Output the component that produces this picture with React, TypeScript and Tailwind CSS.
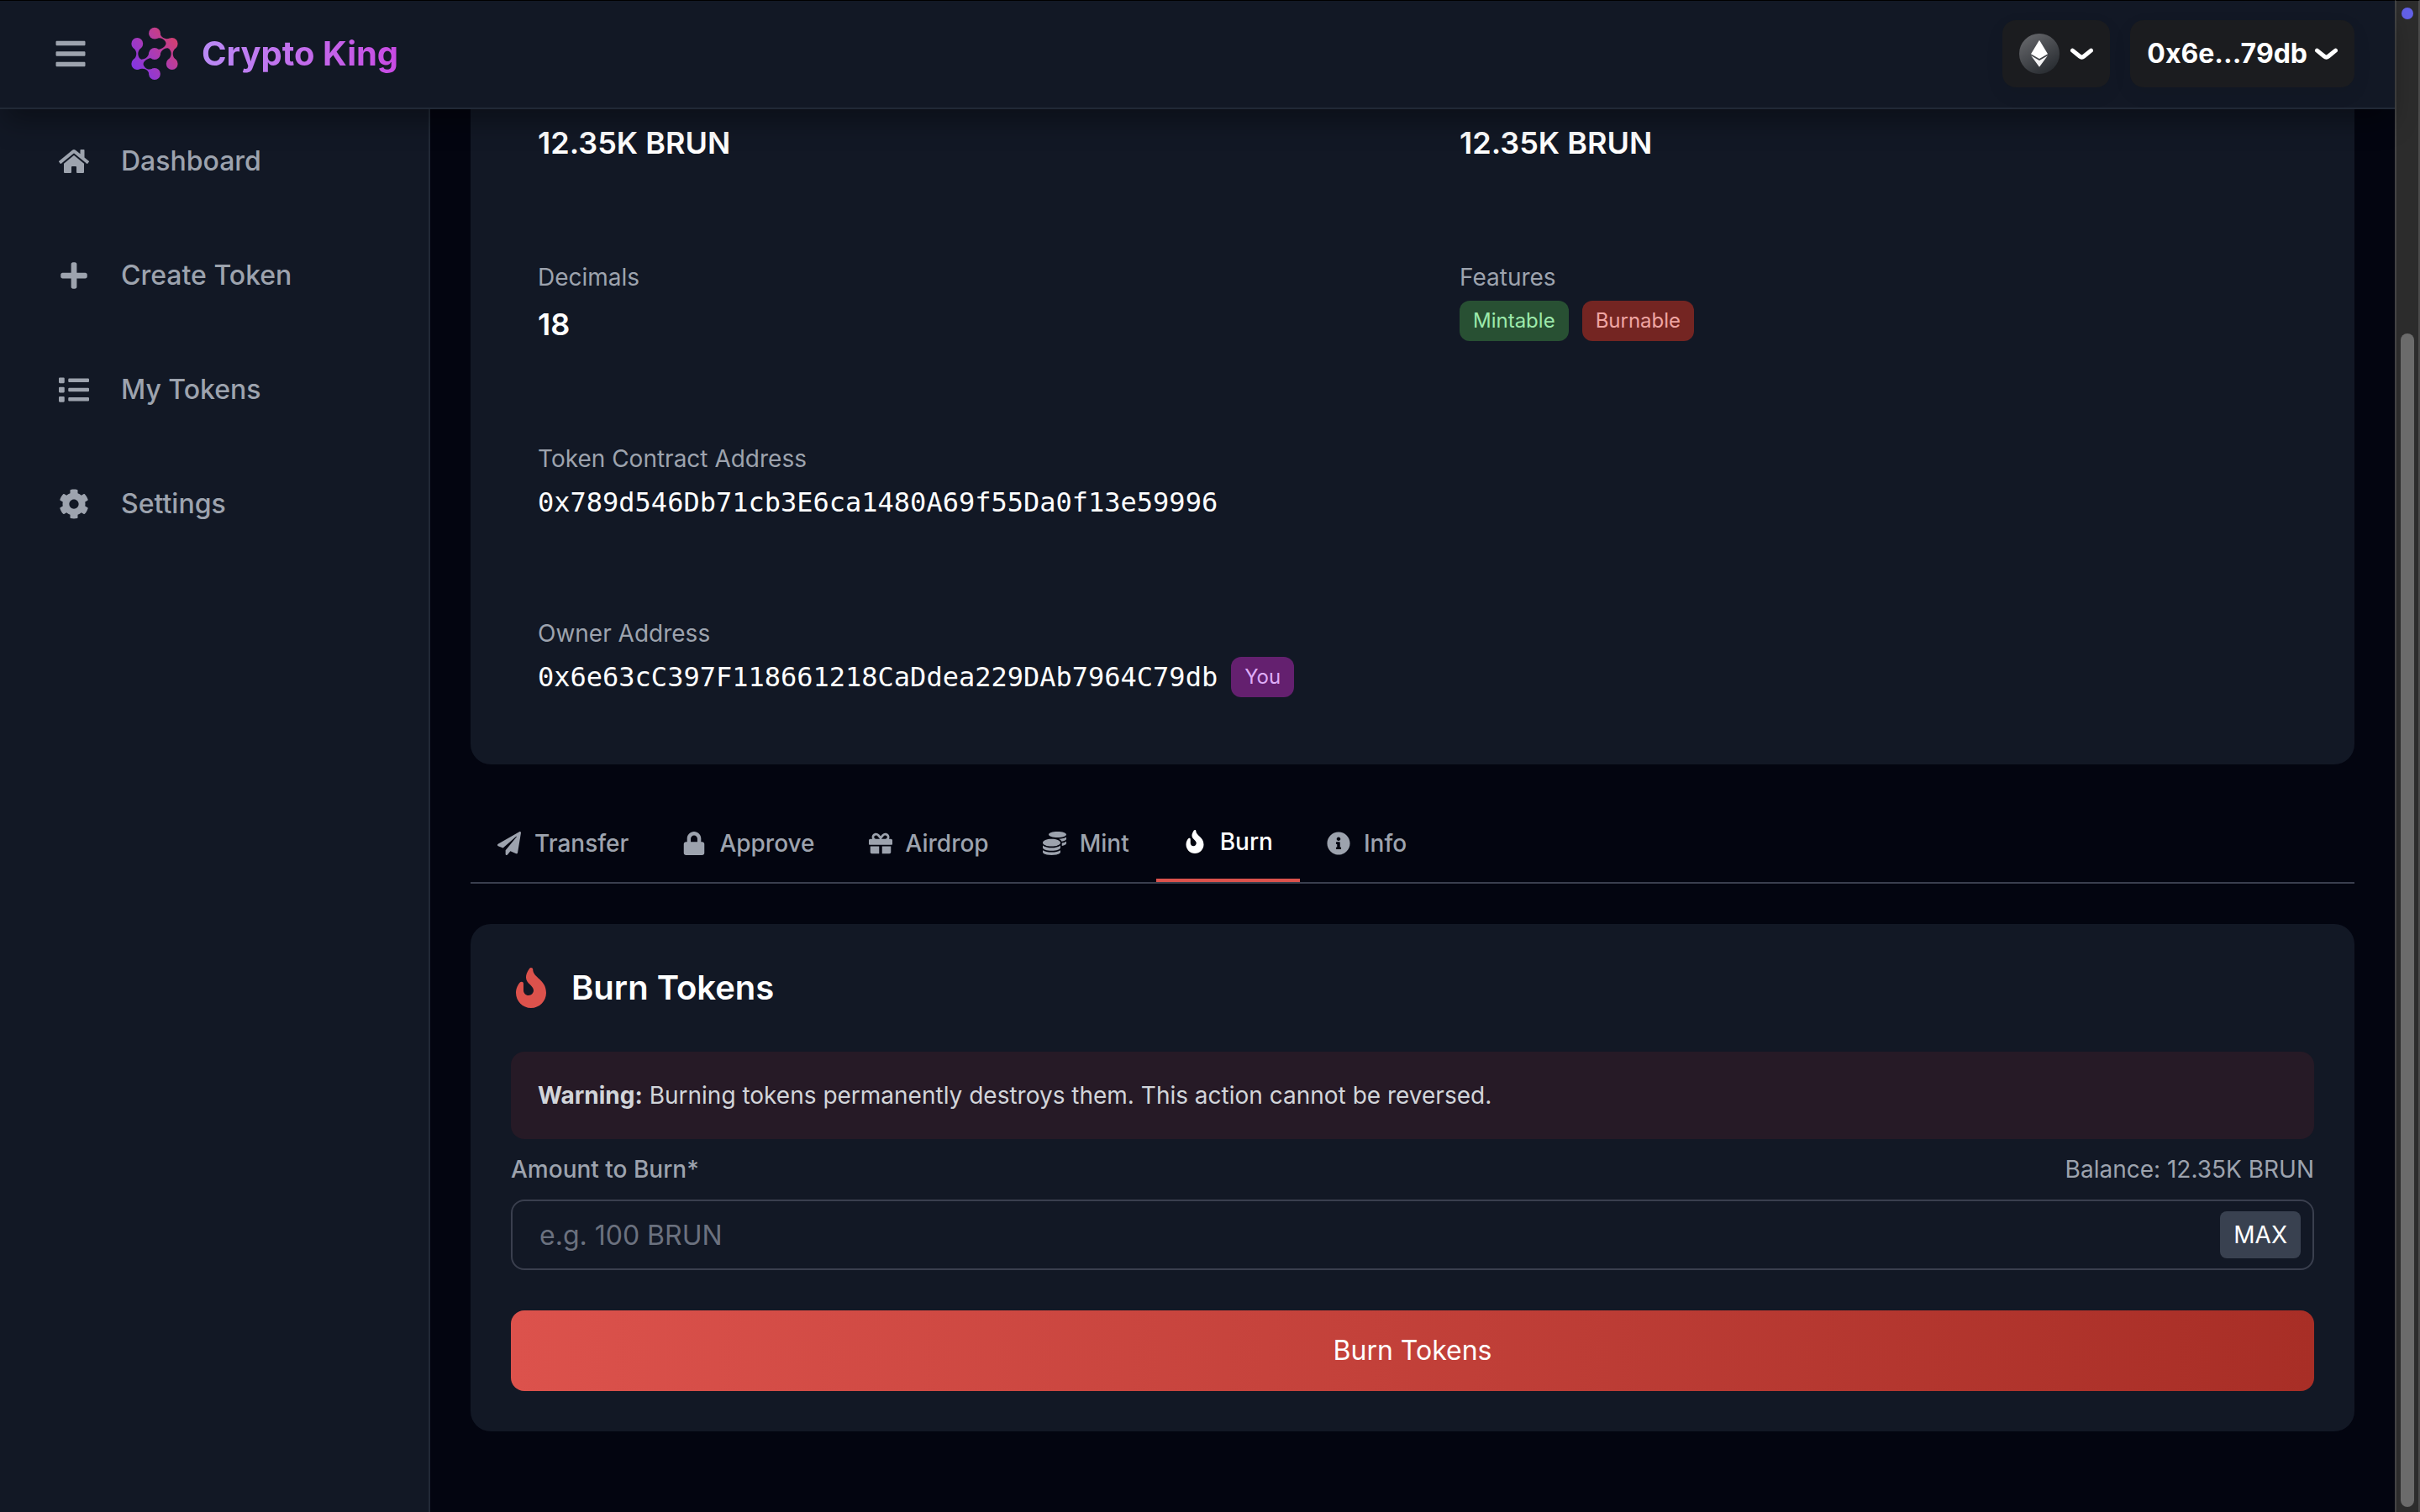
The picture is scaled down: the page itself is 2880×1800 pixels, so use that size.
import type { ReactNode } from "react";
import type { IconType } from "react-icons";
import {
  FaBars,
  FaCog,
  FaCoins,
  FaFire,
  FaGift,
  FaHome,
  FaInfoCircle,
  FaList,
  FaLock,
  FaPaperPlane,
  FaPlus,
} from "react-icons/fa";

const navItems: { label: string; icon: IconType }[] = [
  { label: "Dashboard", icon: FaHome },
  { label: "Create Token", icon: FaPlus },
  { label: "My Tokens", icon: FaList },
  { label: "Settings", icon: FaCog },
];

const tabs: { label: string; icon: IconType; active?: boolean }[] = [
  { label: "Transfer", icon: FaPaperPlane },
  { label: "Approve", icon: FaLock },
  { label: "Airdrop", icon: FaGift },
  { label: "Mint", icon: FaCoins },
  { label: "Burn", icon: FaFire, active: true },
  { label: "Info", icon: FaInfoCircle },
];

const logoNodes = [
  [38, 15.7],
  [58.7, 28],
  [17.3, 28],
  [38, 40],
  [58.7, 52],
  [17.3, 52],
  [38, 64],
];

function Logo() {
  return (
    <svg className="size-16" viewBox="6 8 64 64" aria-hidden="true">
      <defs>
        <linearGradient id="logo" gradientUnits="userSpaceOnUse" x1="14" y1="56" x2="60" y2="22">
          <stop offset="0" stopColor="#8536e0" />
          <stop offset="0.5" stopColor="#ac3bb4" />
          <stop offset="1" stopColor="#d03f74" />
        </linearGradient>
      </defs>
      <g fill="url(#logo)">
        {logoNodes.map(([cx, cy]) => (
          <circle key={`${cx}-${cy}`} cx={cx} cy={cy} r="6.9" />
        ))}
        {/* Tapered links: wide at each node, thin in the middle */}
        <path d="M12.5 32.5Q16.3 36 16.3 40Q16.3 44 12.5 47.5H22.1Q18.3 44 18.3 40Q18.3 36 22.1 32.5Z" />
        <path d="M53.9 32.5Q57.7 36 57.7 40Q57.7 44 53.9 47.5H63.5Q59.7 44 59.7 40Q59.7 36 63.5 32.5Z" />
        <path d="M44.5 14.5Q44.5 18.5 48.3 21Q51.5 23 56 21.5L52 30Q52 25 47.5 22.3Q44 20.5 39.5 22.2Z" />
        <path d="M36.7 33.5Q42 36.5 47.3 33.2Q52 30.5 52 25.5L60 34.5Q53 32.2 49 34.5Q44.6 37 44.8 42Z" />
        <path d="M39.3 46.5Q34 43.5 28.7 46.8Q24 49.5 24 54.5L16 45.5Q23 47.8 27 45.5Q31.4 43 31.2 38Z" />
        <path d="M31.5 65.2Q31.5 61.2 27.7 58.7Q24 56.5 16 58.9L24 49.5Q24 55 28.5 57.7Q32 59.5 36.5 57.5Z" />
      </g>
    </svg>
  );
}

function EthIcon() {
  return (
    <svg className="size-12" viewBox="0 0 48 48" aria-hidden="true">
      <defs>
        <linearGradient id="ethDisc" x1="0.2" y1="0" x2="0.8" y2="1">
          <stop offset="0" stopColor="#66676b" />
          <stop offset="1" stopColor="#25292e" />
        </linearGradient>
      </defs>
      <circle cx="24" cy="24" r="24" fill="url(#ethDisc)" />
      <path d="M24 7.7L34 24.2L24 29.9L14 24.2Z" fill="#fff" />
      <path d="M14.1 26.2L24 31.9L33.9 26.2L24 39.7Z" fill="#f2f2f3" />
    </svg>
  );
}

function ChevronIcon() {
  return (
    <svg className="h-3.5 w-7" viewBox="0 0 14 7" fill="none" aria-hidden="true">
      <path
        d="M12.75 1.54001L8.51647 5.0038C7.77974 5.60658 6.72026 5.60658 5.98352 5.0038L1.75 1.54001"
        stroke="currentColor"
        strokeWidth="2.5"
        strokeLinecap="round"
        strokeLinejoin="round"
      />
    </svg>
  );
}

function Field({ label, children, wide }: { label: string; children: ReactNode; wide?: boolean }) {
  return (
    <div className={wide ? "col-span-2 flex flex-col gap-2 p-8" : "flex flex-col gap-2 p-8"}>
      <dt className="text-[28px] leading-10 text-[#9da3ae]">{label}</dt>
      <dd className="flex items-center gap-4">{children}</dd>
    </div>
  );
}

export default function App() {
  return (
    <div className="flex min-h-screen bg-[#030510] font-['Inter',sans-serif] text-white">
      <div className="flex min-w-0 flex-1 flex-col">
        <header className="relative z-10 flex items-center justify-between border-t border-b-2 border-t-black border-b-[#212936] bg-[#121825] py-6 pt-[23px] pr-12 pl-16 shadow-[0_20px_30px_-6px_rgba(0,0,0,0.35)]">
          <div className="flex items-center gap-12">
            <button type="button" aria-label="Toggle menu" className="text-[40px] text-[#9da3ae]">
              <FaBars />
            </button>
            <a href="#" className="flex items-center gap-6">
              <Logo />
              <span className="bg-linear-to-r from-[#b98af5] to-[#c849e3] bg-clip-text text-[40px] leading-[56px] font-bold text-transparent">
                Crypto King
              </span>
            </a>
          </div>
          <div className="flex items-center gap-6">
            <button
              type="button"
              aria-label="Choose network"
              className="flex h-20 items-center gap-3 rounded-2xl bg-[#1b1c1f] px-5 shadow-[0_8px_24px_rgba(0,0,0,0.06)]"
            >
              <EthIcon />
              <ChevronIcon />
            </button>
            <button
              type="button"
              className="flex h-20 items-center gap-2 rounded-2xl bg-[#1b1c1f] px-5 text-[32px] font-bold shadow-[0_8px_24px_rgba(0,0,0,0.06)]"
            >
              0x6e...79db
              <ChevronIcon />
            </button>
          </div>
        </header>

        <div className="flex flex-1">
          <aside className="w-[512px] shrink-0 border-r-2 border-[#212936] bg-[#121825]">
            <nav className="flex flex-col gap-12 px-8 pt-[18px]">
              {navItems.map(({ label, icon: Icon }) => (
                <a key={label} href="#" className="flex h-[88px] items-center gap-8 px-8 text-[#9da3ae]">
                  <span className="flex w-12 justify-center text-[36px]">
                    <Icon />
                  </span>
                  <span className="text-[32px] leading-[48px] font-medium">{label}</span>
                </a>
              ))}
            </nav>
          </aside>

          <main className="min-w-0 flex-1 px-12 pb-24">
            <section className="rounded-b-3xl bg-[#121825] px-12 pb-12">
              <dl className="grid grid-cols-2 gap-12">
                <div className="px-8 pt-3 pb-8 text-[36px] leading-[56px] font-semibold">
                  <dd>12.35K BRUN</dd>
                </div>
                <div className="px-8 pt-3 pb-8 text-[36px] leading-[56px] font-semibold">
                  <dd>12.35K BRUN</dd>
                </div>
                <Field label="Decimals">
                  <span className="text-[36px] leading-[56px] font-semibold">18</span>
                </Field>
                <Field label="Features">
                  <span className="rounded-xl bg-[#285033] px-4 py-2 text-2xl leading-8 text-[#9ce9ab]">
                    Mintable
                  </span>
                  <span className="rounded-xl bg-[#742522] px-4 py-2 text-2xl leading-8 text-[#f0a5a3]">
                    Burnable
                  </span>
                </Field>
                <Field label="Token Contract Address" wide>
                  <span className="font-['DejaVu_Sans_Mono',monospace] text-[32px] leading-[48px]">
                    0x789d546Db71cb3E6ca1480A69f55Da0f13e59996
                  </span>
                </Field>
                <Field label="Owner Address" wide>
                  <span className="font-['DejaVu_Sans_Mono',monospace] text-[32px] leading-[48px]">
                    0x6e63cC397F118661218CaDdea229DAb7964C79db
                  </span>
                  <span className="rounded-xl bg-[#64206f] px-4 py-2 text-2xl leading-8 text-[#dfadf8]">
                    You
                  </span>
                </Field>
              </dl>
            </section>

            <div role="tablist" className="mt-12 mb-12 flex border-b-2 border-[#3a3f4e]">
              {tabs.map(({ label, icon: Icon, active }) => (
                <button
                  key={label}
                  type="button"
                  role="tab"
                  aria-selected={!!active}
                  className={
                    active
                      ? "flex h-[92px] items-center gap-4 border-b-4 border-[#dc524c] px-8 text-[28px] font-medium"
                      : "flex h-[92px] items-center gap-4 px-8 text-[28px] font-medium text-[#9da3ae]"
                  }
                >
                  <Icon />
                  {label}
                </button>
              ))}
            </div>

            <section className="rounded-3xl bg-[#121825] p-12">
              <h2 className="flex items-center gap-6 text-[40px] leading-[56px] font-semibold">
                <FaFire className="text-5xl text-[#dc524c]" />
                Burn Tokens
              </h2>
              <p className="mt-12 rounded-2xl bg-[#261a26] p-8 text-[28px] leading-10 text-[#d2d5da]">
                <strong className="font-bold">Warning:</strong> Burning tokens permanently destroys them. This
                action cannot be reversed.
              </p>
              <form onSubmit={(event) => event.preventDefault()}>
                <div className="mt-4 mb-4 flex items-center justify-between text-[28px] leading-10 text-[#9da3ae]">
                  <label htmlFor="burn-amount" className="font-medium">
                    Amount to Burn*
                  </label>
                  <span>Balance: 12.35K BRUN</span>
                </div>
                <div className="flex h-[84px] items-center rounded-2xl border-2 border-[#3a3f4e] pr-3.5">
                  <input
                    id="burn-amount"
                    type="text"
                    placeholder="e.g. 100 BRUN"
                    className="h-full min-w-0 flex-1 bg-transparent px-8 text-[32px] outline-none placeholder:text-[#6b717f]"
                  />
                  <button
                    type="button"
                    className="h-14 rounded-lg bg-[#394150] px-4 text-[28px] leading-10"
                  >
                    MAX
                  </button>
                </div>
                <button
                  type="submit"
                  className="mt-12 h-24 w-full rounded-2xl bg-linear-to-r from-[#dc524c] to-[#a82e26] text-[32px]"
                >
                  Burn Tokens
                </button>
              </form>
            </section>
          </main>
        </div>
      </div>

      <div
        aria-hidden="true"
        className="flex w-[30px] shrink-0 flex-col items-center gap-[374px] border-t border-r-2 border-l-2 border-t-black border-r-[#4a4a4a] border-l-[#434343] bg-[#2c2c2c] pt-2 pb-1.5"
      >
        <span className="size-3.5 shrink-0 rounded-full bg-[#6361e8]" />
        <span className="w-4 flex-1 rounded-full bg-[#6b6b6b]" />
      </div>
    </div>
  );
}
